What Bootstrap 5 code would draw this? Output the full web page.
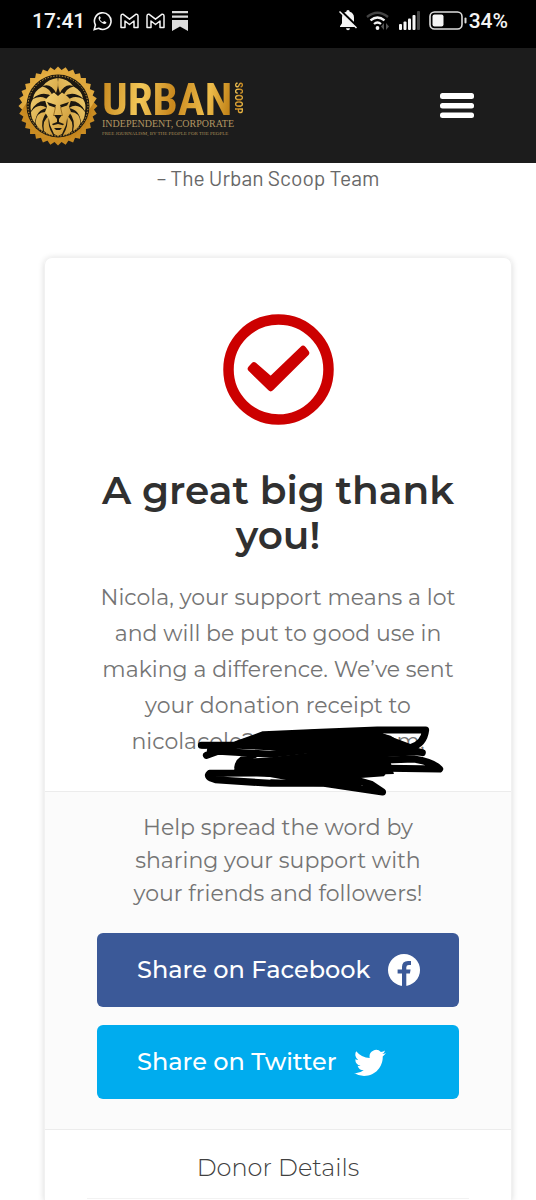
<!DOCTYPE html>
<html lang="en">
<head>
<meta charset="utf-8">
<meta name="viewport" content="width=device-width, initial-scale=1">
<title>Urban Scoop – Thank you</title>
<link href="https://cdn.jsdelivr.net/npm/bootstrap@5.3.0/dist/css/bootstrap.min.css" rel="stylesheet">
<style>
body{font-family:Montserrat,Inter,sans-serif;background:#fff;color:#747474;min-height:100vh}
svg{display:block;flex-shrink:0}
.phone-bar{background:#000;color:#f4f4f4;height:48px;padding:0 28px 7px 32px;font:500 21px/24px Roboto,sans-serif}
.site-bar{background:#1c1c1c;height:115px;padding:0 59px 0 18px}
.brand-name{font:700 45px/36px "Roboto Condensed","Liberation Sans Narrow",sans-serif}
.brand-side{font:700 11px/12px "Roboto Condensed",sans-serif;writing-mode:vertical-rl}
.gold{background:linear-gradient(100deg,#c8891f,#f2c758 30%,#c8871d 55%,#eebd4b 80%,#b9780f);-webkit-background-clip:text;background-clip:text;color:transparent}
.brand-text{padding-top:8px}
.brand-line{font:10px/12px "Liberation Serif",serif;color:#b29662;white-space:nowrap}
.brand-tiny{font:5px/7px "Liberation Serif",serif;color:#a88c58;white-space:nowrap}
.menu-btn{width:40px;height:40px;padding:3px}
.team{font:21px/30px Barlow,Roboto,sans-serif;color:#686868;margin-bottom:64px}
.receipt{margin:0 24px 0 44px;border:1px solid #f1f1f1;border-bottom:0;border-radius:8px 8px 0 0;box-shadow:0 1px 6px rgba(0,0,0,.15)}
.thanks{padding:56px 40px 31px}
.thanks h1{font-size:39px;line-height:45px;font-weight:600;color:#303030;margin:43px 0 22px}
.thanks p{font-size:22px;line-height:36px;margin:0}
.hidden-part{display:inline-block;width:116px}
.scribble{position:absolute;left:0;top:-3px;width:247px;height:72px}
.share{background:#fbfbfb;border-top:1px solid #ececec;border-bottom:1px solid #ececec;padding:19px 52px 30px}
.share p{font-size:22px;line-height:33px;margin:0 24px 23px}
.share-btn{height:74px;border-radius:6px;padding:0 24px 0 40px;gap:18px;color:#fff;font-size:24px;font-weight:500;border:0;white-space:nowrap}
.share-btn:hover{color:#fff}
.fb{background:#3b5998;margin-bottom:18px}
.tw{background:#00acee}
.donor{padding:21px 42px 0}
.donor h2{font-size:24px;line-height:34px;font-weight:300;color:#404040;margin:0 0 13px}
.donor hr{margin:0;border-color:#ccc}
</style>
</head>
<body class="d-flex flex-column">
<div class="phone-bar d-flex align-items-center justify-content-between">
  <div class="d-flex align-items-center">
    <span class="me-2">17:41</span>
    <svg class="me-2" width="19" height="20" viewBox="0 0 19 20" fill="none" stroke="#f4f4f4" stroke-width="1.6"><path d="M1.2 18.6 2.4 14A8.3 8.3 0 1 1 5.6 17.3Z"/><path d="M6.2 5.4c-1.4 1.3-.4 3.6 1.3 5.4s4.400 3 5.700 1.500l.2-1-2.300-1.200-1.100 1.100c-1.600-.7-2.500-1.600-3.200-3l1-1.100-1-2Z" fill="#f4f4f4" stroke="none"/></svg>
    <svg class="me-1" width="22" height="16" viewBox="0 0 22 16" fill="none" stroke="#f4f4f4" stroke-width="1.500" stroke-linejoin="round"><path d="M1 3.200Q1 .8 3.200 1.300L9.500 6.200 15.800 1.300Q18 .8 18 3.200V14.500H14V8L9.500 11.500 5 8V14.500H1Z"/></svg>
    <svg class="me-1" width="22" height="16" viewBox="0 0 22 16" fill="none" stroke="#f4f4f4" stroke-width="1.500" stroke-linejoin="round"><path d="M1 3.200Q1 .8 3.200 1.300L9.500 6.200 15.800 1.300Q18 .8 18 3.200V14.500H14V8L9.500 11.500 5 8V14.500H1Z"/></svg>
    <svg width="16" height="20" viewBox="0 0 16 20" fill="#ddd"><path d="M0 0h16v2.200H0zM0 4.500h16v2.200H0zM0 9h16v11l-8-4.500L0 20z"/></svg>
  </div>
  <div class="d-flex align-items-center">
    <svg class="me-2" width="19" height="21" viewBox="0 0 19 21"><path d="M9 0q1.700 0 1.700 1.700 4.300 1.300 4.300 6v5.500l2 3V17H1v-.8l2-3V7.700q0-4.700 4.300-6Q7.300 0 9 0ZM7 18.300h4Q10.800 20.300 9 20.300T7 18.300Z" fill="#f4f4f4"/><path d="m1.500 .5 17 16.500" stroke="#000" stroke-width="2.500"/><path d="m.5 1.500 17 16.500" stroke="#f4f4f4" stroke-width="1.500"/></svg>
    <svg class="me-2" width="25" height="20" viewBox="0 0 25 20" fill="none" stroke="#f4f4f4" stroke-width="2.300"><path d="M1 6q10.500-8.500 21 0" stroke="#444"/><path d="M4.500 9.300q7-5.700 14 0M8 13q3.500-3 7 0"/><circle cx="11.500" cy="17" r="1.900" fill="#f4f4f4" stroke="none"/><path d="m18 12-3 3.500 3 3.500zM20 12l3 3.500-3 3.500z" fill="#555" stroke="none"/></svg>
    <svg class="me-2" width="22" height="19" viewBox="0 0 22 19" fill="#f4f4f4"><rect y="13" width="3" height="6" rx="1"/><rect x="4.500" y="10.500" width="3" height="8.500" rx="1"/><rect x="9" y="7.500" width="3" height="11.500" rx="1"/><rect x="13.500" y="4" width="3" height="15" rx="1"/><rect x="18" width="3" height="19" rx="1" fill="#444"/></svg>
    <svg width="40" height="19" viewBox="0 0 40 19"><rect x="1" y="1" width="32" height="17" rx="4.500" fill="none" stroke="#ddd" stroke-width="1.600"/><rect x="3.500" y="3.500" width="11" height="12" rx="2" fill="#f4f4f4"/><rect x="35.500" y="6.500" width="2" height="6" rx="1" fill="#ddd"/></svg>
    <span>34%</span>
  </div>
</div>
<header class="site-bar d-flex align-items-center justify-content-between">
  <a href="#" class="d-flex align-items-center text-decoration-none" aria-label="Urban Scoop">
    <svg width="80" height="80" viewBox="0 0 80 80">
      <defs><linearGradient id="g" x2="1" y2="1"><stop stop-color="#c98b22"/><stop offset=".35" stop-color="#e6b145"/><stop offset=".6" stop-color="#bd7c16"/><stop offset="1" stop-color="#e2ab3b"/></linearGradient>
      <linearGradient id="f" x2="1" y2="1"><stop stop-color="#f3d477"/><stop offset="1" stop-color="#c9922f"/></linearGradient>
      <path id="q" d="M40 .5 79.500 40 40 79.500 .5 40Z"/>
      <path id="mane" d="M39.500 12Q30 13 25 20 33 17 38 27 41 20 39.500 12ZM24.500 20.500Q16 25 15 32.500 25 24 35 31 32 22 24.500 20.500ZM15 33Q11.500 38 13 45 20 32 32 36 25 28 15 33ZM13 46Q13 53 17 57 18 44 29 42 20 36 13 46ZM17.500 57Q20 63 25 65 22 54 29 46 18 45 17.500 57ZM26 65Q30 69 35 69 29 60 31 50 24 54 26 65Z"/></defs>
      <g fill="url(#g)"><use href="#q"/><use href="#q" transform="rotate(11.250 40 40)"/><use href="#q" transform="rotate(22.500 40 40)"/><use href="#q" transform="rotate(33.750 40 40)"/><use href="#q" transform="rotate(45 40 40)"/><use href="#q" transform="rotate(56.250 40 40)"/><use href="#q" transform="rotate(67.500 40 40)"/><use href="#q" transform="rotate(78.750 40 40)"/></g>
      <circle cx="40" cy="40" r="31.500" fill="#1c1810"/><circle cx="40" cy="40" r="30" fill="none" stroke="#d9a844" stroke-width="1" stroke-dasharray="1.300 1.600"/>
      <g fill="url(#f)"><use href="#mane"/><use href="#mane" transform="matrix(-1 0 0 1 80 0)"/></g>
      <path fill="url(#f)" d="M31 30 36 26.500 40 30 44 26.500 49 30 53 34 51 41 53 46 49 53 48 59 44 68 40 70 36 68 32 59 31 53 27 46 29 41 27 34Z"/>
      <path fill="#1c1810" d="m29 36 9 3-1 2.500-6-2zM51 36l-9 3 1 2.500 6-2zM36 49h8l-3 4v3l5 2-1 1.200-5-1.200-5 1.200-1-1.200 5-2v-3zM36 62h8l-2 2h-4z"/>
      <path d="m37.500 41-2 9M42.500 41l2 9" stroke="#8c5f18" stroke-width=".8"/>
    </svg>
    <span class="brand-text d-flex flex-column ms-1">
      <span class="d-flex"><span class="brand-name gold">URBAN</span><span class="brand-side gold">SCOOP</span></span>
      <span class="brand-line">INDEPENDENT, CORPORATE</span>
      <span class="brand-tiny">FREE JOURNALISM, BY THE PEOPLE FOR THE PEOPLE</span>
    </span>
  </a>
  <button class="menu-btn btn border-0" type="button" aria-label="Menu"><svg width="34" height="26" viewBox="0 0 34 26" fill="#fff"><rect width="34" height="6" rx="2.500"/><rect y="10" width="34" height="5.500" rx="2.500"/><rect y="19.500" width="34" height="5.500" rx="2.500"/></svg></button>
</header>
<main class="flex-grow-1 d-flex flex-column">
  <p class="team text-center">– The Urban Scoop Team</p>
  <section class="receipt flex-grow-1 text-center">
    <div class="thanks">
      <svg class="mx-auto" width="111" height="111" viewBox="0 0 111 111"><circle cx="55.500" cy="55.500" r="50" fill="none" stroke="#c00" stroke-width="10.500"/><path d="M31 51.500 47.700 66 80 35 83 39 47.700 74 28 54.700Z" fill="#c00" stroke="#c00" stroke-width="6.500" stroke-linejoin="round"/></svg>
      <h1>A great big thank you!</h1>
      <p>Nicola, your support means a lot and will be put to good use in making a difference. We’ve sent your donation receipt to <span class="text-nowrap">nicola<span class="position-relative">cole2<svg class="scribble" viewBox="220 138 740 216" preserveAspectRatio="none" aria-hidden="true"><g fill="none" stroke="#000" stroke-width="21" stroke-linecap="round" stroke-linejoin="round"><path d="M233 199H330M248 229 420 167 590 160 760 153H905Q900 195 860 206L750 165M260 215 440 226 550 213M895 221 800 205M790 243 870 240Q930 250 947 270L790 268M342 265Q345 238 390 228M342 272 450 278M480 285 400 282 258 283Q245 294 275 302L440 313H600L690 326 776 339 740 315 650 290"/></g><path d="M340 185 400 168 520 155 600 150 740 153 800 170 840 196 900 212V228L790 234 800 250 810 285 785 286 780 292 700 298 720 312 700 332 600 322 440 318 440 301 487 303 410 289 340 276 335 260 350 240 430 236 550 222 550 212 480 216 340 209 260 229Z"/></svg></span><span class="hidden-part"></span>com.</span></p>
    </div>
    <div class="share">
      <p>Help spread the word by sharing your support with your friends and followers!</p>
      <button type="button" class="btn share-btn fb d-flex align-items-center w-100">Share on Facebook
        <svg width="32" height="32" viewBox="0 0 32 32"><circle cx="16" cy="16" r="16" fill="#fff"/><path d="M14 32V19.500H9.600v-4H14V13q0-6 6-6h3v3.900h-2.200Q18.300 10.900 18.300 13.200v2.300h4.300l-.7 4h-3.600V32Z" fill="#3b5998"/></svg></button>
      <button type="button" class="btn share-btn tw d-flex align-items-center w-100">Share on Twitter
        <svg width="32" height="32" viewBox="0 0 16 16" fill="#fff"><path d="M5.026 15c6.038 0 9.341-5.003 9.341-9.334 0-.14 0-.282-.006-.422A6.685 6.685 0 0 0 16 3.542a6.658 6.658 0 0 1-1.889.518 3.301 3.301 0 0 0 1.447-1.817 6.533 6.533 0 0 1-2.087.793A3.286 3.286 0 0 0 7.875 6.030a9.325 9.325 0 0 1-6.767-3.429 3.289 3.289 0 0 0 1.018 4.382A3.323 3.323 0 0 1 .64 6.575v.045a3.288 3.288 0 0 0 2.632 3.218 3.203 3.203 0 0 1-.865.115 3.230 3.230 0 0 1-.614-.057 3.283 3.283 0 0 0 3.067 2.277A6.588 6.588 0 0 1 .78 13.580a6.320 6.320 0 0 1-.78-.045A9.344 9.344 0 0 0 5.026 15z"/></svg></button>
    </div>
    <div class="donor"><h2>Donor Details</h2><hr></div>
  </section>
</main>
<script src="https://cdn.jsdelivr.net/npm/bootstrap@5.3.0/dist/js/bootstrap.bundle.min.js"></script>
</body>
</html>
